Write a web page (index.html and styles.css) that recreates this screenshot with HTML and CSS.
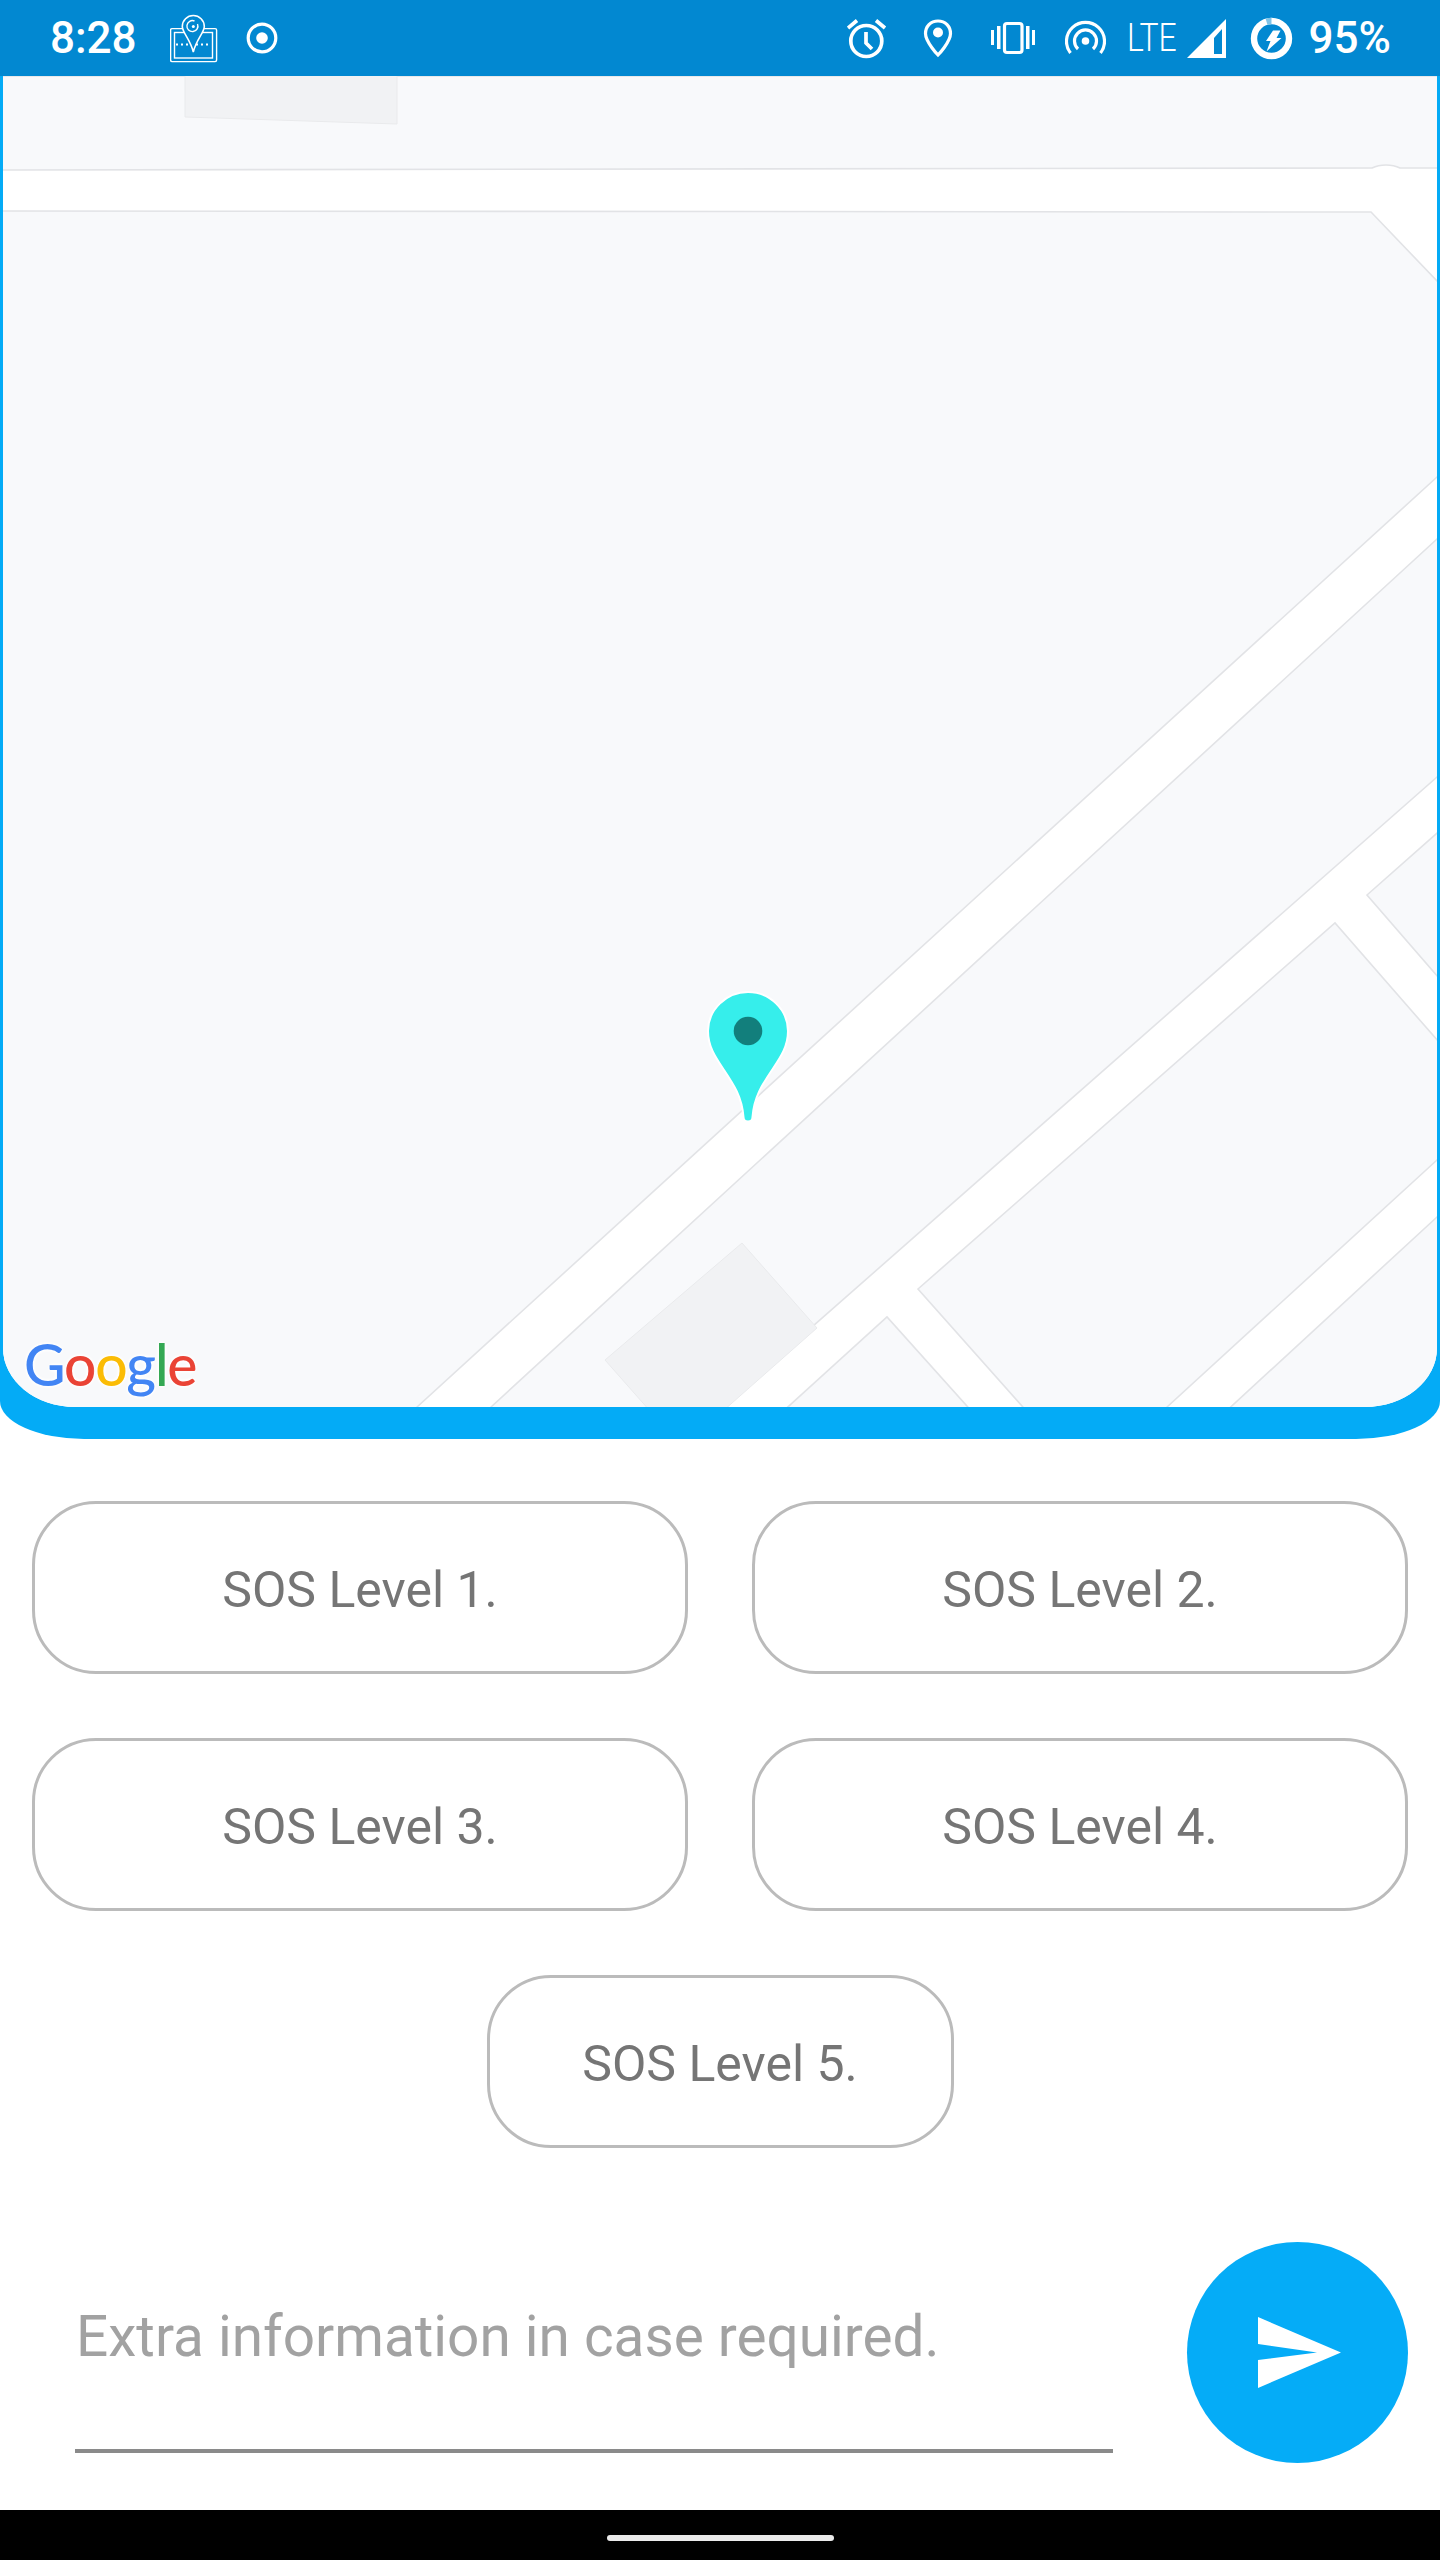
FILE: index.html
```html
<!DOCTYPE html>
<html lang="en">
<head>
<meta charset="utf-8">
<title>SOS</title>
<link rel="stylesheet" href="styles.css">
</head>
<body>
<div class="screen">
  <header class="status">
    <div class="status-left">
      <span class="clock">8:28</span>
      <svg class="ic-mapapp" viewBox="170 14 48 49" aria-hidden="true">
        <rect class="thin" x="170.6" y="28.6" width="46" height="33" rx="1.5"/>
        <rect class="thin" x="174.5" y="32.5" width="38" height="25.5"/>
        <path class="dots" d="M176 44.5H211"/>
        <path class="pin-app" d="M193.3 15.5a11 11 0 0 0-11 11c0 6 8 13 11 25.500 3-12.500 11-19.500 11-25.500a11 11 0 0 0-11-11Z"/>
        <path class="thin" d="M197.500 24a5.500 5.500 0 1 1-3-3"/>
        <circle class="solid" cx="193.300" cy="26.500" r="1.500"/>
      </svg>
      <svg class="ic-record" viewBox="0 0 32 32" aria-hidden="true">
        <circle class="line" cx="16" cy="16" r="13.800"/>
        <circle class="solid" cx="16" cy="16" r="5.800"/>
      </svg>
    </div>
    <div class="status-right">
      <svg class="ic-alarm" viewBox="848 16 40 42" aria-hidden="true">
        <circle class="line line-bold" cx="867.300" cy="40" r="15.500"/>
        <path class="line line-bold" d="M867 31v11l6 6M849 27l9-7.500M886 27l-9-7.500"/>
      </svg>
      <svg class="ic-loc" viewBox="924 16 30 42" aria-hidden="true">
        <path class="line" d="M939 20c-7.500 0-12.500 5.500-12.500 12.500C926.500 41 939 54 939 54s12.500-13 12.500-21.500C951.500 25.500 946.500 20 939 20Z"/>
        <circle class="solid" cx="939" cy="31.500" r="5"/>
      </svg>
      <svg class="ic-vib" viewBox="992 20 44 36" aria-hidden="true">
        <rect class="line" x="1005.500" y="23.500" width="17.500" height="29" rx="2.500"/>
        <path class="solid" d="M992 30h3v15h-3ZM998 26h3.500v23H998ZM1027 26h3.500v23H1027ZM1033 30h3v15h-3Z"/>
      </svg>
      <svg class="ic-spot" viewBox="1066 18 41 36" aria-hidden="true">
        <path class="line" d="M1071.500 51A19 19 0 1 1 1101.500 51M1079 47A11 11 0 1 1 1094 47"/>
        <circle class="solid" cx="1086.500" cy="39" r="3.800"/>
      </svg>
      <span class="lte"><span class="lte-text">LTE</span></span>
      <svg class="ic-signal" viewBox="1187 18 39 39" aria-hidden="true">
        <path class="solid" fill-rule="evenodd" d="M1187 57 1226 18V57ZM1214 37V53H1222V28Z"/>
      </svg>
      <svg class="ic-batt" viewBox="1250 16 43 43" aria-hidden="true">
        <circle class="ring" cx="1271.500" cy="37.500" r="17.500"/>
        <path class="ring-gap" d="M1266.500 20.700A17.500 17.500 0 0 1 1271.500 20"/>
        <path class="solid" d="M1273 29.500H1280.500L1276.500 37H1281.500L1266.500 50.500 1270.500 40H1266Z"/>
      </svg>
      <span class="percent">95%</span>
    </div>
  </header>

  <section class="map-frame">
    <div class="map">
      <svg class="map-art" viewBox="3 76 1434 1331" aria-hidden="true">
        <rect class="road-bg" x="0" y="70" width="1440" height="1340"/>
        <path class="land" d="M-5 76H1445V168H1400C1392 164 1380 164 1372 168L-5 170Z"/>
        <path class="block" d="M185 70H397V124L185 117Z"/>
        <path class="land" d="M-5 211 1371 212 1437 281 1445 281V470L1437 477 417 1407V1415H-5Z"/>
        <path class="land" d="M1445 532 1437 539 491 1407V1415H712L721 1407 1437 777 1445 770Z"/>
        <path class="land" d="M779 1415 887 1317 975 1415Z"/>
        <path class="land" d="M918 1289 1335 923 1445 1049V1153L1437 1160 1167 1407V1415H1030Z"/>
        <path class="land" d="M1222 1415 1437 1217 1445 1210V1415Z"/>
        <path class="land" d="M1367 895 1445 826V985Z"/>
        <path class="block" d="M742 1243 817 1328 723 1411H650L605 1360Z"/>
        <path class="marker" d="M748 992C770 992 788 1010 788 1031 788 1047 780 1058 772 1070 762 1085 754 1097 752.500 1117A4.500 4.500 0 0 1 743.500 1117C742 1097 734 1085 724 1070 716 1058 708 1047 708 1031 708 1010 726 992 748 992Z"/>
        <circle class="marker-dot" cx="748" cy="1031" r="14.300"/>
      </svg>
      <div class="google"><span class="g-blue">G</span><span class="g-red">o</span><span class="g-yellow">o</span><span class="g-blue">g</span><span class="g-green">l</span><span class="g-red">e</span></div>
    </div>
  </section>

  <section class="levels">
    <button class="level">SOS Level 1.</button>
    <button class="level">SOS Level 2.</button>
    <button class="level">SOS Level 3.</button>
    <button class="level">SOS Level 4.</button>
    <button class="level level-last">SOS Level 5.</button>
  </section>

  <section class="compose">
    <div class="field"><span class="placeholder">Extra information in case required.</span></div>
    <button class="send" aria-label="Send">
      <svg class="send-icon" viewBox="0 0 83 71" aria-hidden="true">
        <path d="M0 0 83 35.500 0 71V43L59 35.500 0 27Z"/>
      </svg>
    </button>
  </section>

  <footer class="nav"><span class="nav-pill"></span></footer>
</div>
</body>
</html>
```

FILE: styles.css
```css
* { box-sizing: border-box; }

html, body {
  margin: 0;
  padding: 0;
  background: #fff;
}

.screen {
  width: 1440px;
  height: 2560px;
  display: flex;
  flex-direction: column;
  font-family: Roboto, "Liberation Sans", sans-serif;
  overflow: hidden;
}

/* status bar */
.status {
  height: 76px;
  flex: none;
  background: #0288d1;
  color: #fff;
  display: flex;
  justify-content: space-between;
  align-items: center;
  position: relative;
  z-index: 1;
}

.status svg { display: block; flex: none; }
.status-left { display: flex; align-items: center; padding-left: 50px; }
.status-right { display: flex; align-items: center; padding-right: 49px; }

.clock, .percent {
  font-size: 44px;
  font-weight: 500;
  line-height: 76px;
}
.clock { width: 120px; }

.line, .thin, .ring, .ring-gap, .dots { fill: none; stroke: #fff; }
.line { stroke-width: 3.2; }
.line-bold { stroke-width: 3.7; }
.thin { stroke-width: 1.4; }
.solid { fill: #fff; }
.dots { stroke-width: 2; stroke-dasharray: 2 3; }
.pin-app { fill: #0288d1; stroke: #fff; stroke-width: 1.6; }
.ring { stroke-width: 6.400; }
.ring-gap { stroke: #7fc3e8; stroke-width: 6.600; }

.ic-mapapp { width: 48px; height: 49px; margin-top: 1px; }
.ic-record { width: 32px; height: 32px; margin-left: 28px; }
.ic-alarm { width: 40px; height: 42px; }
.ic-loc { width: 30px; height: 42px; margin-left: 36px; }
.ic-vib { width: 44px; height: 36px; margin-left: 38px; }
.ic-spot { width: 41px; height: 36px; margin-left: 30px; }
.ic-signal { width: 39px; height: 39px; margin-left: 7px; }
.ic-batt { width: 43px; height: 43px; margin-left: 24px; }

.lte {
  display: block;
  width: 53px;
  margin-left: 21px;
  font-size: 38px;
  font-weight: 300;
  line-height: 44px;
}
.lte-text {
  display: inline-block;
  transform: scaleX(0.84);
  transform-origin: left center;
}
.percent { margin-left: 16px; }

/* map */
.map-frame {
  height: 1363px;
  flex: none;
  position: relative;
  background: #04abf6;
  padding: 0 3px 32px;
  border-radius: 0 0 84px 84px / 0 0 38px 38px;
}

.map-frame::before {
  content: "";
  position: absolute;
  left: 3px;
  right: 3px;
  bottom: 17px;
  height: 40px;
  background: #f8f9fb;
  z-index: -1;
}

.map {
  height: 1331px;
  position: relative;
  overflow: hidden;
  border-radius: 0 0 72px 72px / 0 0 59px 59px;
}

.map-art { display: block; width: 1434px; height: 1331px; }
.road-bg { fill: #fff; }
.land { fill: #f8f9fb; stroke: #e2e3e6; stroke-width: 1.6; }
.block { fill: #f1f2f4; stroke: #e9eaec; stroke-width: 1; }
.marker { fill: #36eeeb; stroke: #fff; stroke-width: 2; }
.marker-dot { fill: #127f7c; }

.google {
  position: absolute;
  left: 21px;
  bottom: 8px;
  font-family: Lato, Roboto, sans-serif;
  font-size: 57px;
  font-weight: 500;
  line-height: 70px;
  letter-spacing: -1.2px;
  text-shadow: 0 0 4px #fff, 0 0 4px #fff, 0 0 5px #fff;
}
.g-blue { color: #4285f4; }
.g-red { color: #ea4335; }
.g-yellow { color: #fbbc05; }
.g-green { color: #34a853; }

/* level buttons */
.levels {
  flex: none;
  display: grid;
  grid-template-columns: 656px 656px;
  column-gap: 64px;
  row-gap: 64px;
  padding: 62px 32px 0;
}

.level {
  height: 173px;
  background: #fff;
  border: 3px solid #bbb;
  border-radius: 64px;
  color: #757575;
  font-family: inherit;
  font-size: 50px;
  font-weight: 400;
  padding: 4px 0 0;
}

.level-last {
  grid-column: 1 / -1;
  justify-self: center;
  width: 467px;
}

/* compose row */
.compose {
  flex: 1;
  display: flex;
  align-items: flex-start;
  padding: 94px 32px 0 75px;
  gap: 74px;
}

.field {
  width: 1038px;
  height: 211px;
  display: flex;
  align-items: flex-end;
  border-bottom: 4px solid #8a8a8a;
  padding-bottom: 79px;
}

.placeholder {
  font-size: 56.700px;
  line-height: 66px;
  color: #a2a2a2;
  padding-left: 1px;
}

.send {
  width: 221px;
  height: 221px;
  flex: none;
  border: 0;
  border-radius: 50%;
  background: #05acf7;
  padding: 0;
  display: flex;
  align-items: center;
  justify-content: center;
}

.send-icon {
  display: block;
  width: 83px;
  height: 71px;
  fill: #fff;
  margin-left: 4px;
}

/* nav */
.nav {
  height: 50px;
  flex: none;
  background: #000;
  display: flex;
  justify-content: center;
  padding-top: 25px;
}

.nav-pill {
  display: block;
  width: 227px;
  height: 6px;
  border-radius: 3px;
  background: #eaeaea;
}
```
